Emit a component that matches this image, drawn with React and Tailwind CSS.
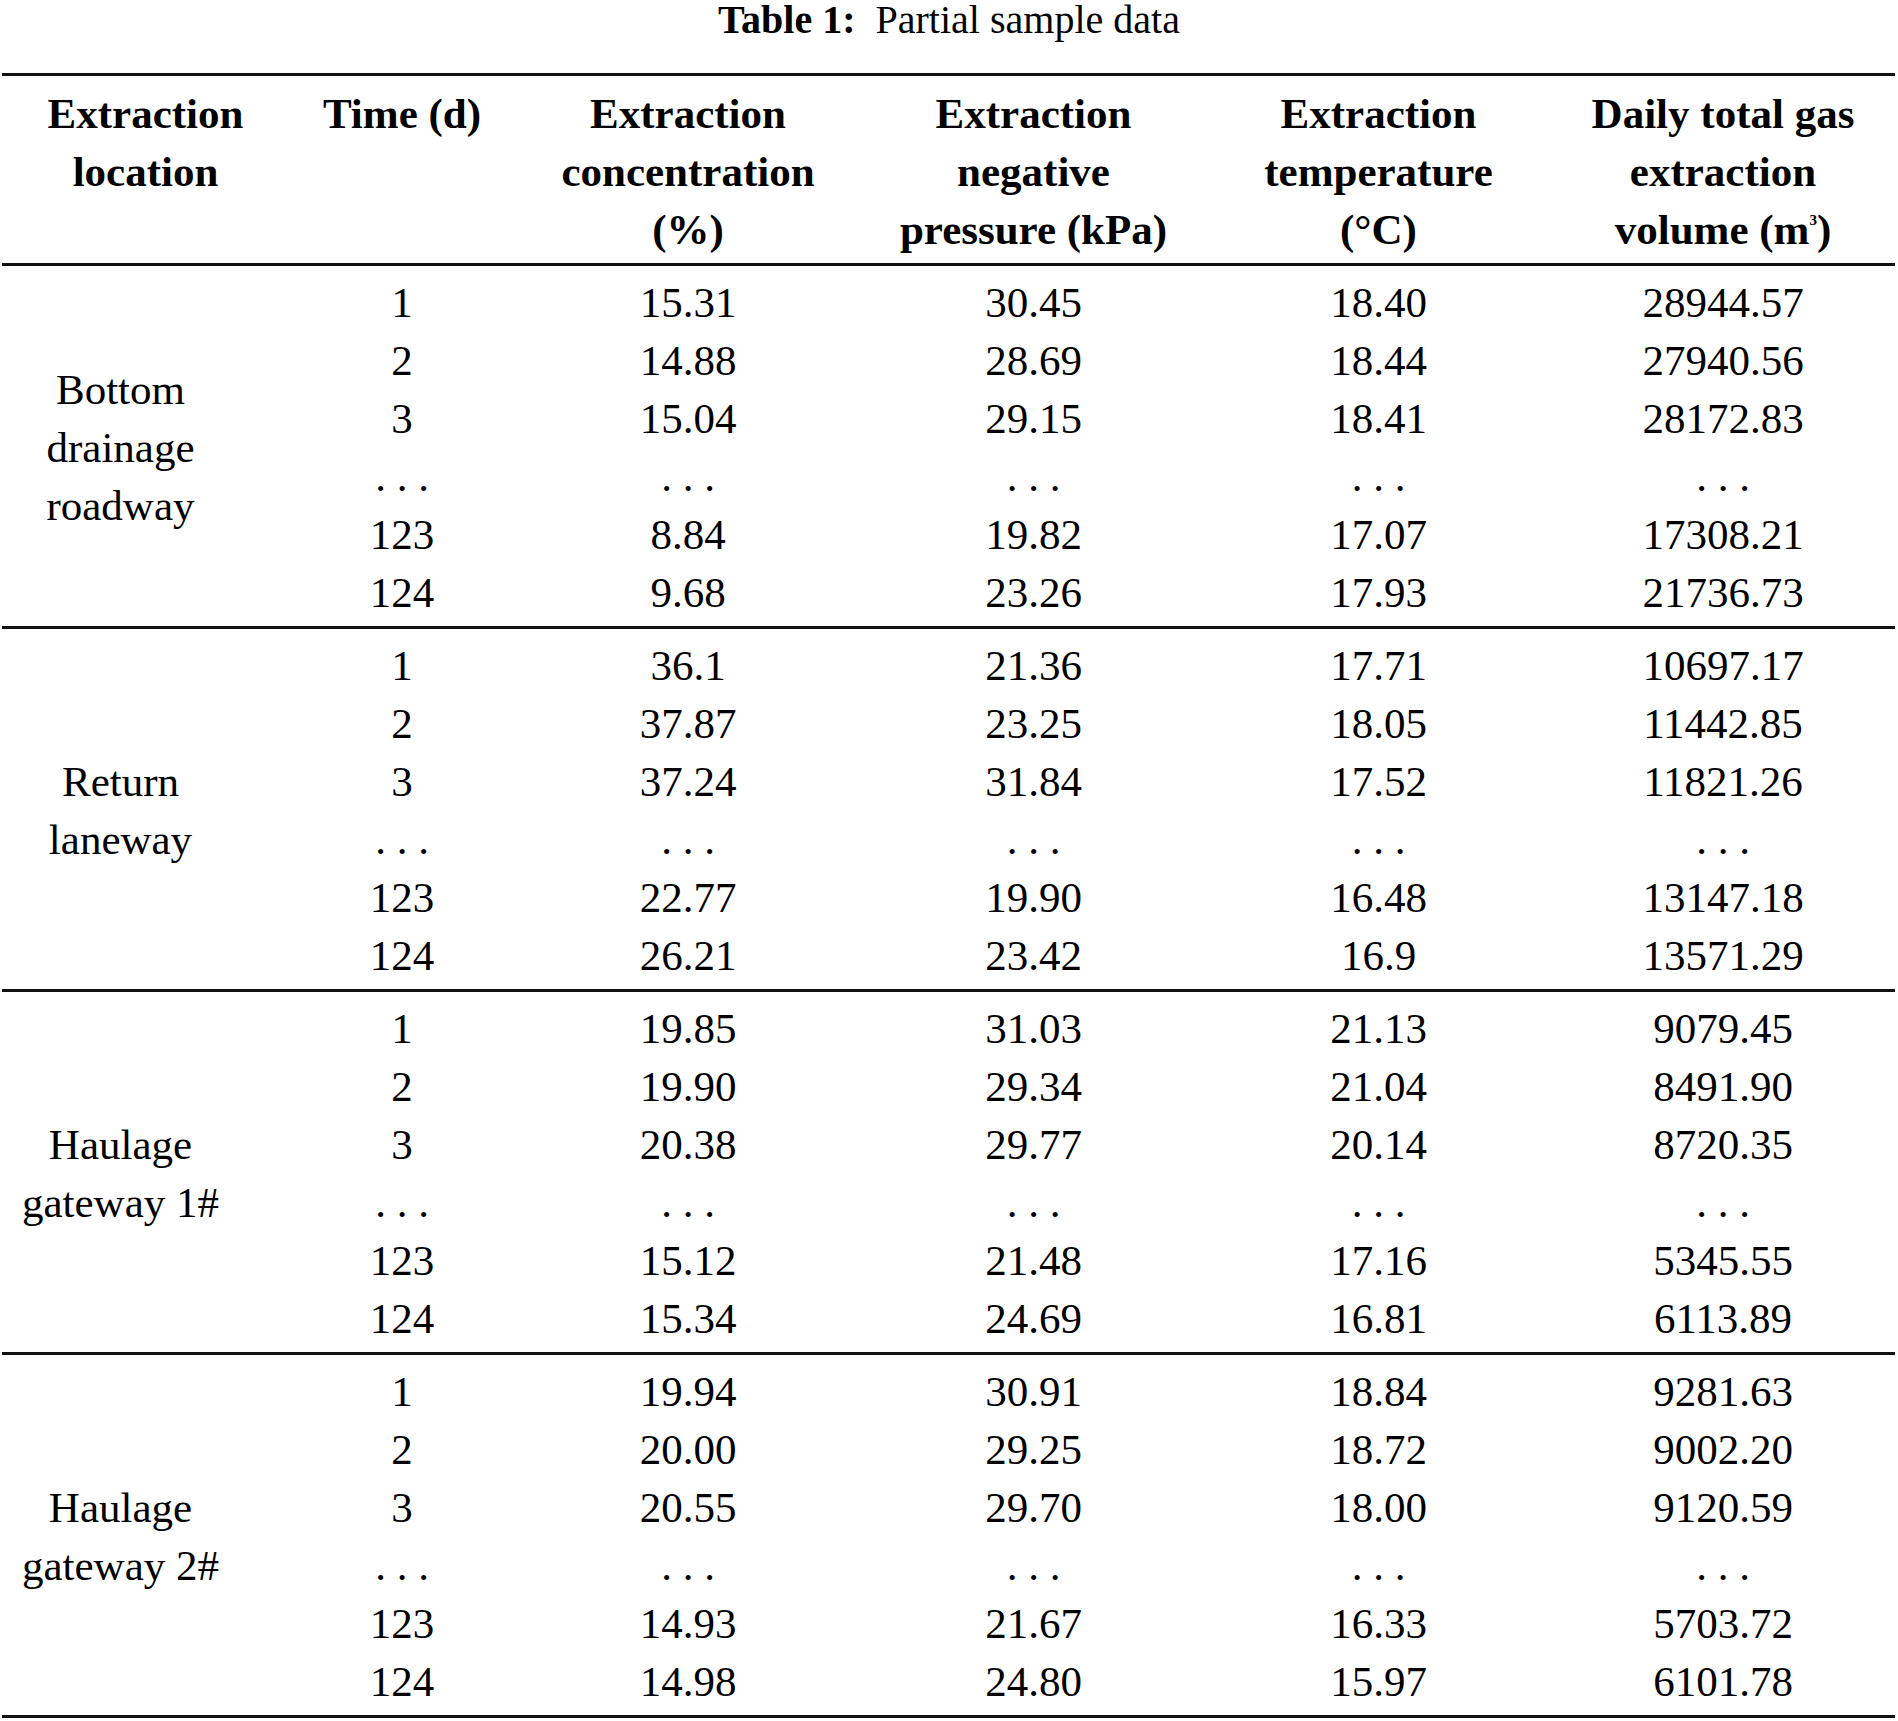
import React from 'react';

const groups = [
  {
    label: ['Bottom', 'drainage', 'roadway'],
    rows: [
      ['1', '15.31', '30.45', '18.40', '28944.57'],
      ['2', '14.88', '28.69', '18.44', '27940.56'],
      ['3', '15.04', '29.15', '18.41', '28172.83'],
      null,
      ['123', '8.84', '19.82', '17.07', '17308.21'],
      ['124', '9.68', '23.26', '17.93', '21736.73'],
    ],
  },
  {
    label: ['Return', 'laneway'],
    rows: [
      ['1', '36.1', '21.36', '17.71', '10697.17'],
      ['2', '37.87', '23.25', '18.05', '11442.85'],
      ['3', '37.24', '31.84', '17.52', '11821.26'],
      null,
      ['123', '22.77', '19.90', '16.48', '13147.18'],
      ['124', '26.21', '23.42', '16.9', '13571.29'],
    ],
  },
  {
    label: ['Haulage', 'gateway 1#'],
    rows: [
      ['1', '19.85', '31.03', '21.13', '9079.45'],
      ['2', '19.90', '29.34', '21.04', '8491.90'],
      ['3', '20.38', '29.77', '20.14', '8720.35'],
      null,
      ['123', '15.12', '21.48', '17.16', '5345.55'],
      ['124', '15.34', '24.69', '16.81', '6113.89'],
    ],
  },
  {
    label: ['Haulage', 'gateway 2#'],
    rows: [
      ['1', '19.94', '30.91', '18.84', '9281.63'],
      ['2', '20.00', '29.25', '18.72', '9002.20'],
      ['3', '20.55', '29.70', '18.00', '9120.59'],
      null,
      ['123', '14.93', '21.67', '16.33', '5703.72'],
      ['124', '14.98', '24.80', '15.97', '6101.78'],
    ],
  },
];

const cols = 'grid grid-cols-[287px_226px_346px_345px_345px_344px]';

const Rule = () => <div className="h-[3px] bg-[#111]" />;

const Lines = ({ lines }) => lines.map((l, i) => <div key={i}>{l}</div>);

export default function App() {
  return (
    <div className="w-[1898px] bg-white text-black font-['Liberation_Serif',serif]">
      {/* caption */}
      <div className="h-[73px] text-center text-[40px] leading-[40px]">
        <span className="font-bold">Table 1:</span>
        <span>&nbsp; Partial sample data</span>
      </div>

      <div className="ml-[2px] w-[1893px] text-[43px] leading-[58px]">
        <Rule />
        {/* header */}
        <div className={`${cols} pt-[9px] pb-[4px] font-bold text-center`}>
          <div><Lines lines={['Extraction', 'location']} /></div>
          <div>Time (d)</div>
          <div><Lines lines={['Extraction', 'concentration', '(%)']} /></div>
          <div><Lines lines={['Extraction', 'negative', 'pressure (kPa)']} /></div>
          <div><Lines lines={['Extraction', 'temperature', '(°C)']} /></div>
          <div>
            <div>Daily total gas</div>
            <div>extraction</div>
            <div>
              volume (m<sup className="text-[15px] -top-[19px]">3</sup>)
            </div>
          </div>
        </div>
        <Rule />

        {groups.map((g, gi) => (
          <div key={gi}>
            <div className={`${cols} pt-[8px] pb-[4px] text-center`}>
              <div className="row-span-6 flex flex-col justify-center pr-[50px]">
                <Lines lines={g.label} />
              </div>
              {g.rows.map((r, ri) =>
                r ? (
                  r.map((v, ci) => <div key={`${ri}-${ci}`}>{v}</div>)
                ) : (
                  [0, 1, 2, 3, 4].map((ci) => <div key={`d-${ci}`}>. . .</div>)
                )
              )}
            </div>
            <Rule />
          </div>
        ))}
      </div>
    </div>
  );
}
